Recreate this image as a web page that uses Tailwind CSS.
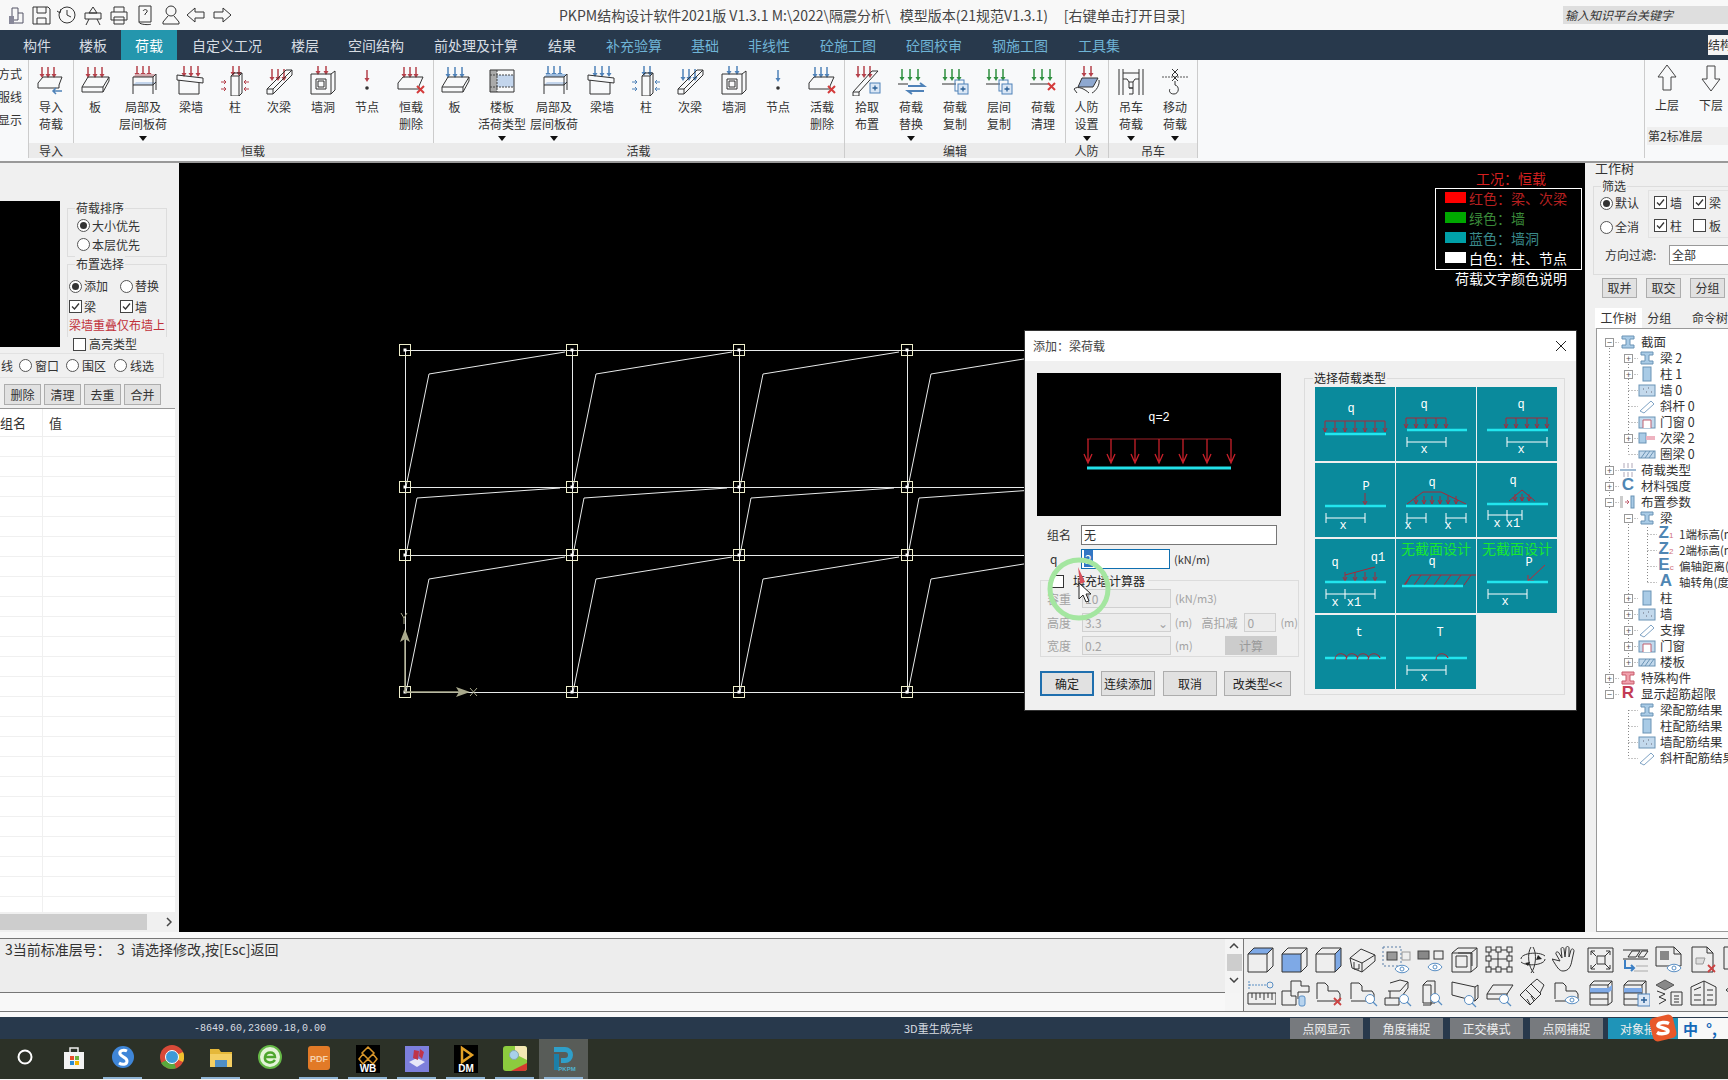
<!DOCTYPE html>
<html lang="zh-CN">
<head>
<meta charset="UTF-8"/>
<title>PKPM结构设计软件</title>
<script src="https://cdn.jsdelivr.net/npm/@tailwindcss/browser@4"></script>
</head>
<body class="bg-[#f5f5f5]">
<div class="relative w-[1728px] h-[1080px] overflow-hidden flex flex-col text-[12px] text-[#333] font-['Noto_Sans_CJK_SC','Liberation_Sans',sans-serif]">

  <!-- title bar -->
  <div class="h-[30px] shrink-0 bg-[#f8f8f8] flex items-center relative">
    <div id="quick" class="flex pl-[3px]"></div>
    <div class="absolute left-[559px] top-[6px] text-[14px] leading-[18px] text-[#444] whitespace-pre">PKPM结构设计软件2021版 V1.3.1 M:\2022\隔震分析\   模型版本(21规范V1.3.1)     [右键单击打开目录]</div>
    <div class="ml-auto w-[165px] h-[18px] bg-[#dedede] italic text-[12px] leading-[18px] pl-[2px] text-[#333]">输入知识平台关键字</div>
  </div>

  <!-- menu bar -->
  <div class="h-[30px] shrink-0 bg-[#28394c] flex pl-[9px] text-[14px] leading-[30px] text-[#d7dde3]">
    <span class="px-[14px]">构件</span><span class="px-[14px]">楼板</span>
    <span class="px-[14px] bg-[#2496ad] text-white">荷载</span>
    <span class="px-[15px]">自定义工况</span><span class="px-[14px]">楼层</span><span class="px-[15px]">空间结构</span><span class="px-[15px]">前处理及计算</span><span class="px-[15px]">结果</span>
    <span class="px-[15px] text-[#6fb4d6]">补充验算</span><span class="px-[14px] text-[#6fb4d6]">基础</span><span class="px-[15px] text-[#6fb4d6]">非线性</span><span class="px-[15px] text-[#6fb4d6]">砼施工图</span><span class="px-[15px] text-[#6fb4d6]">砼图校审</span><span class="px-[15px] text-[#6fb4d6]">钢施工图</span><span class="px-[15px] text-[#6fb4d6]">工具集</span>
    <span class="ml-auto mt-[5px] w-[20px] h-[20px] bg-[#f4f4f4] text-[#333] text-[12px] leading-[20px] overflow-hidden whitespace-nowrap">结构</span>
  </div>

  <!-- ribbon -->
  <div class="h-[100px] shrink-0 bg-[#f8f9fa] flex">
    <div class="w-[29px] shrink-0 h-[98px] border-r border-[#ccc] flex flex-col items-end pr-[6px] pt-[5px] gap-[6px] leading-[17px] whitespace-nowrap overflow-hidden">
      <span>方式</span><span>服线</span><span>显示</span>
    </div>
    <div id="ribbon" class="flex"></div>
    <div class="ml-auto w-[84px] shrink-0 h-[98px] border-l border-[#ccc] flex flex-col">
      <div class="flex">
        <div class="w-[44px] shrink-0 flex flex-col items-center pt-[3px]">
          <svg width="22" height="30" viewBox="0 0 22 30" fill="none" stroke="#444"><path d="M11 2L2 14h5v13h8V14h5z"/></svg>
          <span class="leading-[24px]">上层</span>
        </div>
        <div class="w-[44px] shrink-0 flex flex-col items-center pt-[3px]">
          <svg width="22" height="30" viewBox="0 0 22 30" fill="none" stroke="#444"><path d="M11 28L2 16h5V3h8v13h5z"/></svg>
          <span class="leading-[24px]">下层</span>
        </div>
      </div>
      <div class="mt-[10px] h-[18px] ml-[2px] bg-[#efefef] leading-[18px] pl-[1px]">第2标准层</div>
    </div>
  </div>
  <div class="h-[3px] shrink-0 bg-[#f8f9fa] border-b-2 border-[#999]"></div>

  <!-- main -->
  <div class="h-[769px] shrink-0 flex">
    <!-- left panel -->
    <div class="w-[179px] shrink-0 bg-[#f0f0f0] flex flex-col overflow-hidden">
      <div class="h-[38px]"></div>
      <div class="flex h-[152px]">
        <div class="w-[60px] h-[146px] bg-black shrink-0"></div>
        <div class="ml-[7px] w-[100px] mt-[7px]">
          <div class="relative h-[49px] border border-[#ddd] pt-[7px] pl-[9px]">
            <span class="absolute left-[7px] top-[-9px] bg-[#f0f0f0] px-[1px] leading-[16px]">荷载排序</span>
            <div class="flex items-center gap-[2px] h-[19px]"><span data-radio="on"></span>大小优先</div>
            <div class="flex items-center gap-[2px] h-[19px]"><span data-radio></span>本层优先</div>
          </div>
          <div class="relative h-[73px] mt-[7px] border border-b-0 border-[#ddd] pt-[11px] pl-[1px]">
            <span class="absolute left-[7px] top-[-9px] bg-[#f0f0f0] px-[1px] leading-[16px]">布置选择</span>
            <div class="flex h-[20px] items-center"><span class="flex items-center gap-[2px] w-[51px]"><span data-radio="on"></span>添加</span><span class="flex items-center gap-[2px]"><span data-radio></span>替换</span></div>
            <div class="flex h-[21px] items-center"><span class="flex items-center gap-[2px] w-[51px]"><span data-check="on"></span>梁</span><span class="flex items-center gap-[2px]"><span data-check="on"></span>墙</span></div>
            <div class="text-[#c0303a] leading-[16px] whitespace-nowrap">梁墙重叠仅布墙上</div>
          </div>
          <div class="flex items-center gap-[3px] ml-[6px] mt-[-1px] h-[16px]"><span data-check></span>高亮类型</div>
        </div>
      </div>
      <div class="h-[25px] w-[164px] border border-l-0 border-[#e2e2e2] flex items-center pl-[1px]">
        <span class="w-[18px]">线</span>
        <span class="flex items-center gap-[3px] w-[47px]"><span data-radio></span>窗口</span>
        <span class="flex items-center gap-[3px] w-[48px]"><span data-radio></span>围区</span>
        <span class="flex items-center gap-[3px]"><span data-radio></span>线选</span>
      </div>
      <div class="flex gap-[3px] pl-[4px] mt-[6px] h-[21px] text-center leading-[19px]">
        <span class="w-[37px] bg-[#e1e1e1] border border-[#adadad]">删除</span>
        <span class="w-[37px] bg-[#e1e1e1] border border-[#adadad]">清理</span>
        <span class="w-[37px] bg-[#e1e1e1] border border-[#adadad]">去重</span>
        <span class="w-[37px] bg-[#e1e1e1] border border-[#adadad]">合并</span>
      </div>
      <div class="mt-[3px] w-[175px] h-[504px] bg-white border-t border-[#999] flex flex-col overflow-hidden">
        <div class="flex h-[28px] shrink-0 leading-[27px] text-[13px] border-b border-[#eee]">
          <span class="w-[43px] border-r border-[#eee]">组名</span><span class="pl-[6px]">值</span>
        </div>
        <div id="rows"></div>
      </div>
      <div class="h-[20px] w-[175px] bg-[#f0f0f0] flex items-center relative">
        <span class="w-[147px] h-[16px] bg-[#cdcdcd]"></span>
        <svg class="ml-[19px]" width="6" height="10" viewBox="0 0 6 10" fill="none" stroke="#444" stroke-width="1.5"><path d="M1 1l4 4-4 4"/></svg>
      </div>
    </div>

    <!-- canvas -->
    <div class="w-[1406px] shrink-0 bg-black">
      <svg id="canvas" width="1406" height="769" viewBox="179 163 1406 769" font-family="'Noto Sans CJK SC',sans-serif"></svg>
    </div>

    <!-- right panel -->
    <div class="w-[143px] shrink-0 bg-[#f0f0f0] flex flex-col overflow-hidden">
      <div class="h-[18px] mt-[-3px] pl-[10px] text-[13px] leading-[16px] pt-[0px]">工作树</div>
      <div class="relative ml-[8px] w-[160px] h-[89px] mt-[8px] border border-[#ddd] pt-[3px]">
        <span class="absolute left-[7px] top-[-9px] bg-[#f0f0f0] px-[1px] leading-[16px]">筛选</span>
        <div class="flex">
          <div class="w-[54px] pl-[6px] pt-[1px]">
            <div class="flex items-center gap-[2px] h-[24px]"><span data-radio="on"></span>默认</div>
            <div class="flex items-center gap-[2px] h-[24px]"><span data-radio></span>全消</div>
          </div>
          <div class="w-[100px] border border-[#e2e2e2] pl-[5px] h-[48px]">
            <div class="flex h-[23px] items-center"><span class="flex items-center gap-[3px] w-[39px]"><span data-check="on"></span>墙</span><span class="flex items-center gap-[3px]"><span data-check="on"></span>梁</span></div>
            <div class="flex h-[23px] items-center"><span class="flex items-center gap-[3px] w-[39px]"><span data-check="on"></span>柱</span><span class="flex items-center gap-[3px]"><span data-check></span>板</span></div>
          </div>
        </div>
        <div class="flex items-center mt-[6px] pl-[11px]">
          <span class="w-[64px]">方向过滤:</span>
          <span class="w-[70px] h-[20px] bg-white border border-[#999] leading-[18px] pl-[2px] flex justify-between pr-[2px]">全部<span class="text-[#666]">⌄</span></span>
        </div>
      </div>
      <div class="flex gap-[9px] pl-[17px] mt-[3px] h-[20px] leading-[18px] text-center">
        <span class="w-[35px] shrink-0 bg-[#e1e1e1] border border-[#adadad]">取并</span>
        <span class="w-[35px] shrink-0 bg-[#e1e1e1] border border-[#adadad]">取交</span>
        <span class="w-[35px] shrink-0 bg-[#e1e1e1] border border-[#adadad]">分组</span>
      </div>
      <div class="flex pl-[10px] mt-[10px] h-[20px] leading-[20px] whitespace-nowrap">
        <span class="w-[50px] text-center bg-white">工作树</span>
        <span class="w-[42px] pl-[5px]">分组</span>
        <span class="pl-[10px]">命令树</span>
      </div>
      <div class="relative ml-[11px] w-[140px] flex-1 bg-white border border-[#999] pt-[5px] overflow-hidden">
        <svg class="absolute left-0 top-[-2px]" width="140" height="450" fill="none" stroke="#888" stroke-dasharray="1 2"><path id="treelines"/></svg>
        <div id="tree" class="relative"></div>
      </div>
    </div>
  </div>

  <!-- gap -->
  <div class="h-[7px] shrink-0 bg-[#f8f8f8] border-b border-[#777]"></div>

  <!-- command + toolbars -->
  <div class="h-[73px] shrink-0 flex border-b border-[#777]">
    <div class="w-[1225px] shrink-0 bg-[#f8f8f8] flex flex-col">
      <div class="h-[54px] bg-[#ededed] border-b border-[#777] pl-[5px] text-[14px] leading-[20px] whitespace-pre font-['Noto_Sans_CJK_SC','Liberation_Mono',monospace]">3当前标准层号：  3  请选择修改,按[Esc]返回</div>
    </div>
    <div class="w-[18px] shrink-0 bg-[#f4f4f4] flex flex-col items-center h-[54px] pt-[4px]">
      <svg width="10" height="6" viewBox="0 0 10 6" fill="none" stroke="#444" stroke-width="1.5"><path d="M1 5l4-4 4 4"/></svg>
      <span class="w-[15px] h-[17px] bg-[#cdcdcd] mt-[5px]"></span>
      <svg class="mt-[6px]" width="10" height="6" viewBox="0 0 10 6" fill="none" stroke="#444" stroke-width="1.5"><path d="M1 1l4 4 4-4"/></svg>
    </div>
    <div class="flex-1 bg-[#eeeeee] border-l border-[#777] overflow-hidden pt-[4px]">
      <div id="tools1" class="flex h-[33px] w-[520px]"></div>
      <div id="tools2" class="flex h-[33px] w-[520px]"></div>
    </div>
  </div>
  <div class="h-[5px] shrink-0 bg-[#f8f8f8]"></div>

  <!-- status bar -->
  <div class="h-[22px] shrink-0 bg-[#28394c] flex items-center text-white relative">
    <span class="ml-[194px] w-[710px] text-[10px] text-[#d8dde2] font-['Liberation_Mono',monospace]">-8649.60,23609.18,0.00</span>
    <span class="text-[11px] text-[#d8dde2]">3D重生成完毕</span>
    <div class="ml-auto flex h-[21px] leading-[21px] text-center text-[#eee]">
      <span class="w-[73px] bg-[#777a7e] mr-[7px]">点网显示</span>
      <span class="w-[73px] bg-[#777a7e] mr-[7px]">角度捕捉</span>
      <span class="w-[73px] bg-[#777a7e] mr-[7px]">正交模式</span>
      <span class="w-[73px] bg-[#777a7e] mr-[5px]">点网捕捉</span>
      <span class="w-[70px] bg-[#1f94b8] text-left pl-[12px]">对象捕捉</span>
      <span class="w-[50px] bg-[#f8f8f8] flex items-center gap-[8px] pl-[5px] text-[#1668b8] text-[15px] font-bold">中<span class="leading-none">°,</span></span>
    </div>
    <svg class="absolute left-[1649px] top-[-3px]" width="28" height="28" viewBox="0 0 28 28"><rect x="2" y="2" width="24" height="24" rx="5" fill="#e8582a" transform="rotate(-14 14 14)"/><path d="M20 9.5c-3-1.5-10-1.5-11 1.5s10 3 10 6-8 3.500-11 1.500" fill="none" stroke="#fff" stroke-width="3.500"/></svg>
  </div>

  <!-- taskbar -->
  <div id="taskbar" class="h-[40px] shrink-0 bg-[#2c3127] flex"></div>

  <!-- dialog -->
  <div class="absolute left-[1025px] top-[331px] w-[551px] h-[379px] bg-[#f0f0f0] flex flex-col shadow-[0_0_0_1px_#333]">
    <div class="h-[30px] shrink-0 bg-white flex items-center pl-[8px] pr-[9px] text-[#444]">
      <span>添加：梁荷载</span>
      <svg class="ml-auto" width="12" height="12" viewBox="0 0 12 12" stroke="#222"><path d="M1 1l10 10M11 1L1 11"/></svg>
    </div>
    <div class="flex flex-1">
      <div class="w-[279px] shrink-0 pl-[12px] pt-[12px]">
        <svg id="preview" width="244" height="143" viewBox="1037 373 244 143" class="bg-black block" font-family="'Liberation Mono',monospace"></svg>
        <div class="flex items-center mt-[9px] h-[20px]">
          <span class="w-[44px] pl-[10px]">组名</span>
          <span class="w-[196px] h-[20px] bg-white border border-[#777] pl-[2px] leading-[18px]">无</span>
        </div>
        <div class="flex items-center mt-[4px] h-[20px]">
          <span class="w-[44px] pl-[13px]">q</span>
          <span class="w-[89px] h-[20px] bg-white border border-[#0f6fb0] pl-[2px] leading-[18px]"><span class="bg-[#3277c4] text-white px-[1px]">2</span></span>
          <span class="ml-[4px] text-[11px] text-[#333]">(kN/m)</span>
        </div>
        <div class="relative ml-[3px] mt-[11px] w-[259px] h-[77px] border border-[#dcdcdc] pt-[8px] text-[#a3a3a3] text-[12px]">
          <span class="absolute left-[10px] top-[-7px] bg-[#f0f0f0] flex items-center gap-[9px] text-[#222] pr-[3px] leading-[14px]"><span class="w-[13px] h-[13px] bg-white border border-[#333]"></span>填充墙计算器</span>
          <div class="flex items-center h-[19px]">
            <span class="w-[41px] pl-[6px]">容重</span>
            <span class="w-[89px] h-[19px] bg-[#ececec] border border-[#d0d0d0] pl-[2px] leading-[17px]">10</span>
            <span class="ml-[4px] text-[11px]">(kN/m3)</span>
          </div>
          <div class="flex items-center h-[19px] mt-[5px]">
            <span class="w-[41px] pl-[6px]">高度</span>
            <span class="w-[89px] h-[19px] bg-[#ececec] border border-[#d0d0d0] pl-[2px] leading-[17px] flex justify-between pr-[2px]">3.3<span>⌄</span></span>
            <span class="ml-[4px] w-[27px] text-[11px]">(m)</span>
            <span class="w-[43px]">高扣减</span>
            <span class="w-[32px] h-[19px] bg-[#ececec] border border-[#d0d0d0] pl-[2px] leading-[17px]">0</span>
            <span class="ml-[4px] text-[11px]">(m)</span>
          </div>
          <div class="flex items-center h-[19px] mt-[4px]">
            <span class="w-[41px] pl-[6px]">宽度</span>
            <span class="w-[89px] h-[19px] bg-[#ececec] border border-[#d0d0d0] pl-[2px] leading-[17px]">0.2</span>
            <span class="ml-[4px] w-[50px] text-[11px]">(m)</span>
            <span class="w-[52px] h-[19px] bg-[#cccccc] text-center leading-[19px] text-[#999]">计算</span>
          </div>
        </div>
        <div class="flex mt-[14px] ml-[3px] h-[25px] leading-[23px] text-center text-[#222]">
          <span class="w-[54px] bg-[#e1e1e1] border-2 border-[#1f6fae] leading-[21px]">确定</span>
          <span class="w-[54px] ml-[7px] bg-[#e1e1e1] border border-[#adadad]">连续添加</span>
          <span class="w-[54px] ml-[8px] bg-[#e1e1e1] border border-[#adadad]">取消</span>
          <span class="w-[67px] ml-[7px] bg-[#e1e1e1] border border-[#adadad]">改类型&lt;&lt;</span>
        </div>
      </div>
      <div class="relative w-[261px] h-[317px] mt-[17px] border border-[#dcdcdc] pt-[8px] pl-[10px]">
        <span class="absolute left-[8px] top-[-8px] bg-[#f0f0f0] text-[#222] leading-[14px] px-[1px]">选择荷载类型</span>
        <div id="tiles" class="grid grid-cols-[80px_80px_80px] gap-x-[1px] gap-y-[2px] bg-transparent"></div>
      </div>
    </div>
    <!-- capture ring and pointer -->
    <svg class="absolute left-[20px] top-[224px]" width="68" height="68" viewBox="0 0 68 68">
      <circle cx="34" cy="34" r="29" fill="none" stroke="#a4e6a0" stroke-width="5"/>
      <path d="M33 12l7 15-5 2z" fill="#d8505a"/>
      <path d="M34 28v16l4-4 3 7 3-1-3-7h5z" fill="#fff" stroke="#222"/>
    </svg>
  </div>
</div>

<script>
  const RED = '#b5404a', BLUE = '#4f82b8', GREEN = '#2f8f3f', INK = '#333';

  // small form marks
  document.querySelectorAll('[data-radio]').forEach(el => {
    el.className = 'inline-flex items-center justify-center w-[13px] h-[13px] shrink-0 rounded-full bg-white border border-[#555]';
    if (el.dataset.radio) el.innerHTML = '<span class="w-[7px] h-[7px] rounded-full bg-[#333]"></span>';
  });
  document.querySelectorAll('[data-check]').forEach(el => {
    el.className = 'inline-block w-[13px] h-[13px] shrink-0 bg-white border border-[#444]';
    if (el.dataset.check) el.innerHTML = '<svg width="11" height="11" viewBox="0 0 11 11" fill="none" stroke="#333" stroke-width="1.3"><path d="M2 5.500l2.500 2.500L9 2.500"/></svg>';
  });

  // ribbon icon parts
  function arr(x, y1, y2, c) {
    return `<path d="M${x} ${y1}V${y2 - 3}" stroke="${c}" stroke-width="1.5" fill="none"/><path d="M${x - 2.5} ${y2 - 4}h5l-2.500 4z" fill="${c}"/>`;
  }
  const arrs = (c, xs, y1, y2) => xs.map(x => arr(x, y1, y2, c)).join('');
  const line = d => `<path d="${d}" fill="none" stroke="${INK}" stroke-width="1"/>`;
  const redX = (x, y) => `<path d="M${x} ${y}l7 7M${x + 7} ${y}l-7 7" stroke="#d43b3b" stroke-width="2"/>`;
  const plusDoc = (x, y) => `<rect x="${x}" y="${y}" width="10" height="10" fill="#dbe7f5" stroke="#4f82b8"/><path d="M${x + 2.500} ${y + 5}h5M${x + 5} ${y + 2.500}v5" stroke="#2a5f95" stroke-width="1.3"/>`;
  const ic = {
    slab: c => arrs(c, [9, 16, 23], 1, 12) + line('M3 21l6-10h21l-6 10zM3 21v5h21l6-11v-4M24 21v5'),
    imp: c => arrs(c, [7, 13, 19], 1, 12) + line('M3 17l5-6h19l-3 8v3H3z') + `<path d="M27 25H18M21 22l-3 3 3 3" stroke="${BLUE}" stroke-width="1.500" fill="none"/>`,
    frame: c => arrs(c, [10, 16, 22], 0, 11) + `<path d="M6 11h20l3-3H9z" fill="${c == RED ? '#d3a8ac' : '#9dbcde'}"/><path d="M6 19h20l3-3H9z" fill="#c3d5ec"/>` + line('M6 11h20v17M6 11v17M26 11l3-3v16M6 19h20M26 19l3-3'),
    beam: c => arrs(c, [9, 16, 23], 0, 11) + line('M2 9l26 3v5L2 14zM4 14v14h20V17'),
    col: c => arrs(c, [14, 20], 0, 10) + line('M12 10l3-3h8v20l-3 3h-8zM12 10h8v20M20 10l3-3') + `<path d="M2 16h5M5 14l2 2-2 2M2 23h5M5 21l2 2-2 2M30 16h-5M27 14l-2 2 2 2M30 23h-5M27 21l-2 2 2 2" stroke="${c}" fill="none"/>`,
    sec: c => arrs(c, [9, 15, 21], 3, 15) + line('M4 23L23 4h6L10 23zM4 23v5h6v-5M10 28L29 9V4'),
    hole: c => arrs(c, [11, 19], 0, 9) + line('M4 8h20v20H4zM24 8l4-3v19l-4 4M9 13h10v10H9zM11 15h6v6h-6z'),
    node: c => arr(16, 4, 16, c) + `<circle cx="16" cy="22" r="1.800" fill="#333"/>`,
    del: c => arrs(c, [9, 15, 21], 1, 12) + line('M3 17l5-6h20l-4 9v3H3z') + redX(22, 20),
    type: () => `<rect x="4" y="4" width="7" height="22" fill="#aaa"/><rect x="11" y="9" width="17" height="12" fill="#c3d5ec"/>` + line('M4 4h24v22H4z') + `<path d="M11 4v22M4 9h24M4 21h24" stroke="#444" stroke-dasharray="2 1"/>`,
    pick: () => arrs(RED, [7, 13, 19], 0, 12) + line('M2 26L21 5h6L8 26zM2 26v4h6v-4') + plusDoc(19, 17),
    swap: () => arrs(GREEN, [7, 15, 23], 3, 15) + `<path d="M3 18h10" stroke="#333"/><path d="M13 20h16l-4-3M29 25H13l4 3" stroke="${BLUE}" stroke-width="2" fill="none"/>`,
    copy: () => arrs(GREEN, [6, 13, 20], 3, 15) + `<path d="M3 18h14" stroke="#333"/><rect x="16" y="14" width="9" height="11" fill="none" stroke="${BLUE}"/>` + plusDoc(19, 18),
    clear: () => arrs(GREEN, [7, 15, 23], 3, 15) + `<path d="M3 18h18" stroke="#333"/>` + redX(21, 17),
    civil: () => arrs(RED, [13, 20], 0, 11) + `<path d="M7 21l4-9h16l-5 9z" fill="#8ea8d0" stroke="#333"/>` + line('M3 23c4-4 12 1 15 4M28 14c1 5-3 11-7 13M3 23l3 4'),
    crane: () => line('M4 3v26M8 3v26M24 3v26M28 3v26M8 7h16M8 13h4l2 3h4l2-3h4M14 16v6h4v-6M14 28h4v-6h-4') ,
    hook: () => `<path d="M3 11h26" stroke="#555" stroke-dasharray="2 1"/>` + line('M13 3l6 6-6 6M19 3l-6 6 6 6M16 15v4c5 1 4 9-1 9s-5-4-4-5'),
  };
  function item(w, icon, c, label, caret) {
    const [a, b] = label.split('|');
    return `<div class="${w} h-[83px] shrink-0 flex flex-col items-center pt-[6px]">
      <svg width="32" height="30" viewBox="0 0 32 30" class="shrink-0">${ic[icon](c)}</svg>
      <div class="mt-[2px] h-[34px] w-full text-center leading-[17px] whitespace-nowrap">${a}<br/>${b || ''}</div>
      ${caret ? '<span class="mt-[4px] w-0 h-0 border-x-[4px] border-x-transparent border-t-[5px] border-t-[#111]"></span>' : ''}
    </div>`;
  }
  const N = 'w-[44px]', W = 'w-[52px]';
  const groups = [
    ['导入', [[N, 'imp', RED, '导入|荷载']], 'mr-[-1px]'],
    ['恒载', [[N, 'slab', RED, '板'], [W, 'frame', RED, '局部及|层间板荷', 1], [N, 'beam', RED, '梁墙'], [N, 'col', RED, '柱'], [N, 'sec', RED, '次梁'], [N, 'hole', RED, '墙洞'], [N, 'node', RED, '节点'], [N, 'del', RED, '恒载|删除']], 'mr-[-1px]'],
    ['活载', [['w-[43px]', 'slab', BLUE, '板'], [W, 'type', BLUE, '楼板|活荷类型', 1], [W, 'frame', BLUE, '局部及|层间板荷', 1], [N, 'beam', BLUE, '梁墙'], [N, 'col', BLUE, '柱'], [N, 'sec', BLUE, '次梁'], [N, 'hole', BLUE, '墙洞'], [N, 'node', BLUE, '节点'], [N, 'del', BLUE, '活载|删除']], ''],
    ['编辑', [[N, 'pick', RED, '拾取|布置'], [N, 'swap', GREEN, '荷载|替换', 1], [N, 'copy', GREEN, '荷载|复制'], [N, 'copy', GREEN, '层间|复制'], [N, 'clear', GREEN, '荷载|清理']], 'mr-[-1px]'],
    ['人防', [['w-[43px]', 'civil', RED, '人防|设置', 1]], ''],
    ['吊车', [[N, 'crane', INK, '吊车|荷载', 1], [N, 'hook', INK, '移动|荷载', 1]], ''],
  ];
  document.getElementById('ribbon').innerHTML = groups.map(([name, items, gap]) => `
    <div class="flex flex-col border-r border-[#ccc] ${gap} h-[98px]">
      <div class="flex">${items.map(i => item(...i)).join('')}</div>
      <div class="h-[15px] bg-[#ebebeb] text-center leading-[15px]">${name}</div>
    </div>`).join('');

  // quick access icons
  const quick = [
    '<path d="M7 4h6v12H7zM13 9h5v10h-9" stroke="#556"/><path d="M4 12h5v8H4z" fill="#889" stroke="none"/>',
    '<path d="M3 3h15l2 2v15H3zM7 3v6h9V3M7 20v-6h9v6" stroke="#333"/>',
    '<circle cx="11" cy="11" r="8" stroke="#333"/><path d="M11 6v5l4 2" stroke="#333"/><path d="M1 7l3 2 1-4" stroke="#333"/>',
    '<path d="M3 9h16v6H3zM7 15l-3 6M15 15l3 6M11 3l4 6H7z" stroke="#333"/>',
    '<path d="M6 8V3h10v5M3 8h16v8H3zM6 13h10v7H6z" stroke="#333"/>',
    '<path d="M5 2h12v16H5zM5 18c0 3 12 3 12 2M9 7c1-2 5-2 4 1l-2 2v1" stroke="#333"/>',
    '<circle cx="11" cy="7" r="5" stroke="#333"/><path d="M8 12l-5 6v2h16v-2l-5-6" stroke="#333"/>',
    '<path d="M2 11l8-7v4h9v6h-9v4z" stroke="#333"/>',
    '<path d="M20 11l-8-7v4H3v6h9v4z" stroke="#333"/>',
  ];
  const quickW = ['w-[25px]','w-[26px]','w-[25px]','w-[27px]','w-[25px]','w-[27px]','w-[25px]','w-[26px]','w-[26px]'];
  document.getElementById('quick').innerHTML = quick.map((p, i) => `<span class="${quickW[i]} flex justify-center"><svg width="22" height="22" viewBox="0 0 22 22" fill="none">${p}</svg></span>`).join('');

  // left table rows
  document.getElementById('rows').innerHTML = Array.from({ length: 24 }, () =>
    '<div class="h-[20px] border-b border-[#f0f0f0] flex"><span class="w-[43px] border-r border-[#f0f0f0]"></span></div>').join('');

  // structure view
  const xs = [405, 572, 739, 907, 1074], ys = [350, 487, 555, 692];
  let cv = '<g stroke="#e8eaea" stroke-width="1" fill="none">';
  ys.forEach(y => cv += `<path d="M405 ${y + 0.5}H1040"/>`);
  xs.slice(0, 4).forEach(x => cv += `<path d="M${x + 0.5} 350V692"/>`);
  xs.slice(0, 4).forEach(x => {
    cv += `<path d="M${x + 1} 692L${x + 24} 579L${x + 160} 557"/><path d="M${x + 1} 555L${x + 12} 498L${x + 155} 488"/><path d="M${x + 1} 487L${x + 24} 374L${x + 160} 352"/>`;
  });
  cv += '</g>';
  xs.slice(0, 4).forEach(x => ys.forEach(y => {
    cv += `<rect x="${x - 5.500}" y="${y - 5.500}" width="11" height="11" fill="none" stroke="#eeeecb"/><rect x="${x - 1.500}" y="${y - 1.500}" width="3" height="3" fill="#fff"/>`;
  }));
  cv += `<g stroke="#a9a98c" stroke-width="1.500" fill="none"><path d="M405 692V635M405 692H465"/></g>
    <path d="M405 629l-5 13 5-3 5 3zM470 692l-14-5 3 5-3 5z" fill="#a9a98c"/>
    <path d="M401 613l3 5 3-5M404 618v6M470 688l7 8M477 688l-7 8" stroke="#a9a98c" fill="none"/>`;
  cv += `<text x="1476" y="184" font-size="14" fill="#d62020">工况：恒载</text>
    <rect x="1435.500" y="188.500" width="146" height="81" fill="none" stroke="#fff"/>
    <rect x="1445" y="192" width="21" height="11" fill="#ff0000"/><rect x="1445" y="212" width="21" height="11" fill="#00a800"/>
    <rect x="1445" y="232" width="21" height="11" fill="#00a0a8"/><rect x="1445" y="252" width="21" height="11" fill="#ffffff"/>
    <text x="1469" y="204" font-size="14" fill="#b82020">红色：梁、次梁</text>
    <text x="1469" y="224" font-size="14" fill="#3a8a3a">绿色：墙</text>
    <text x="1469" y="244" font-size="14" fill="#3a8a8a">蓝色：墙洞</text>
    <text x="1469" y="264" font-size="14" fill="#ffffff">白色：柱、节点</text>
    <text x="1455" y="284" font-size="14" fill="#ffffff">荷载文字颜色说明</text>`;
  document.getElementById('canvas').innerHTML = cv;

  // dialog preview
  let pv = `<text x="1159" y="421" fill="#fff" font-size="12" text-anchor="middle">q=2</text>
    <path d="M1087 439H1231" stroke="#a02028"/><path d="M1087 468H1231" stroke="#22e0e8" stroke-width="3"/>`;
  [1088, 1111, 1135, 1159, 1183, 1207, 1231].forEach(x => {
    pv += `<path d="M${x} 439V461M${x - 4} 454l4 9 4-9" stroke="#c8202a" stroke-width="1.300" fill="none"/>`;
  });
  document.getElementById('preview').innerHTML = pv;

  // load type tiles
  const T = (x, y, s) => `<text x="${x}" y="${y}" fill="#fff" font-size="12" text-anchor="middle">${s}</text>`;
  const Beam = (a, b, y) => `<path d="M${a} ${y}H${b}" stroke="#22e6ee" stroke-width="2.500"/>`;
  const Dim = (y, ...p) => `<path d="M${p[0]} ${y}H${p[p.length - 1]}" stroke="#fff"/>` + p.map(x => `<path d="M${x} ${y - 5}V${y + 5}" stroke="#fff"/>`).join('');
  const Dn = (x, y1, y2) => `<path d="M${x} ${y1}V${y2}M${x - 2} ${y2 - 4}l2 4 2-4" stroke="#a82838" fill="none"/>`;
  const Dns = (xl, y1, y2) => xl.map(x => Dn(x, y1, y2)).join('');
  const Top = d => `<path d="${d}" stroke="#a82838" fill="none"/>`;
  const Green = `<text x="40" y="15" fill="#18e830" font-size="14" text-anchor="middle" font-family="'Noto Sans CJK SC',sans-serif">无截面设计</text>`;
  const Arc = x => `<path d="M${x - 5} 45c0-8 10-8 12-2M${x + 7} 43l-2-3" stroke="#a82838" fill="none"/>`;
  const tiles = [
    T(36, 25, 'q') + Top('M10 34H70') + Dns([10, 20, 30, 40, 50, 60, 70], 34, 45) + Beam(10, 71, 47),
    T(28, 21, 'q') + Top('M10 31H50') + Dns([10, 20, 30, 40, 50], 31, 41) + Beam(11, 71, 43) + Dim(55, 11, 50) + T(28, 66, 'x'),
    T(44, 21, 'q') + Top('M29 31H71') + Dns([29, 39, 50, 60, 70], 31, 41) + Beam(10, 71, 43) + Dim(55, 30, 70) + T(44, 66, 'x'),
    T(51, 27, 'P') + Dn(50, 30, 42) + Beam(10, 71, 43) + Dim(55, 11, 50) + T(28, 66, 'x'),
    T(36, 23, 'q') + Top('M11 41L27 29H45L70 41') + Dns([20, 28, 36, 44, 52, 60], 33, 41) + Beam(10, 71, 43) + Dim(55, 11, 30) + Dim(55, 50, 70) + T(12, 66, 'x') + T(52, 66, 'x'),
    T(36, 21, 'q') + Top('M32 38L45 27L58 38') + Dns([38, 45, 52], 31, 38) + Beam(10, 71, 41) + Dim(52, 11, 30, 45) + T(20, 64, 'x') + T(36, 64, 'x1'),
    T(20, 27, 'q') + T(63, 22, 'q1') + Top('M30 36L60 28') + Dns([30, 40, 50, 60], 33, 42) + Beam(10, 71, 43) + Dim(55, 11, 30, 60) + T(20, 67, 'x') + T(39, 67, 'x1'),
    Green + T(36, 26, 'q') + Top('M8 48L15 36H80') + [15, 25, 35, 45, 55, 65, 75].map(x => `<path d="M${x} 36L${x - 7} 46" stroke="#a82838"/>`).join('') + Beam(6, 67, 47),
    Green + T(52, 27, 'P') + `<path d="M68 26L51 42M51 36v6h6" stroke="#c02838" fill="none"/>` + Beam(10, 71, 43) + Dim(55, 11, 50) + T(28, 66, 'x'),
    T(44, 21, 't') + Beam(10, 71, 43) + Arc(25) + Arc(36) + Arc(47) + Arc(58),
    T(44, 21, 'T') + Beam(10, 71, 43) + Arc(45) + Dim(55, 11, 50) + T(28, 66, 'x'),
  ];
  document.getElementById('tiles').innerHTML = tiles.map(t =>
    `<svg width="80" height="74" viewBox="0 0 80 74" class="bg-[#0a8a9c] block" font-family="'Liberation Mono',monospace">${t}</svg>`).join('');

  // work tree
  const tI = {
    ibeam: '<path d="M3 2h12v3h-4v6h4v3H3v-3h4V5H3z" fill="#a9cbe6" stroke="#6a93b5"/>',
    column: '<rect x="5" y="1" width="8" height="14" fill="#a9cbe6" stroke="#6a93b5"/>',
    wall: '<rect x="1" y="3" width="16" height="11" fill="#c3d9ec" stroke="#6a93b5"/><path d="M5 7h1M10 6h1M8 10h1M13 10h1" stroke="#667"/>',
    brace: '<path d="M2 13L13 3l3 3L6 15z" fill="#fff" stroke="#7fa3c4"/>',
    door: '<rect x="1" y="3" width="16" height="11" fill="#c3d9ec" stroke="#6a93b5"/><path d="M5 14V6h8v8" fill="#fff" stroke="#c06070"/>',
    second: '<rect x="1" y="3" width="7" height="10" fill="#a9cbe6" stroke="#6a93b5"/><rect x="8" y="6" width="9" height="4" fill="#eeb3c0"/>',
    ring: '<rect x="1" y="5" width="16" height="7" fill="#c3d9ec" stroke="#6a93b5"/><path d="M3 12l5-7M7 12l5-7M11 12l5-7" stroke="#6a93b5"/>',
    load: '<path d="M1 8h16" stroke="#7fa3c4" stroke-width="1.500"/><path d="M5 1v5M9 1v5M13 1v5M5 10v5M9 10v5M13 10v5" stroke="#b0a8b8"/>',
    layout: '<rect x="1" y="2" width="3" height="12" fill="#ccc"/><path d="M6 8h4M8 6l2 2-2 2" stroke="#c06070" fill="none"/><rect x="12" y="2" width="3" height="12" fill="#a9cbe6" stroke="#6a93b5"/>',
    red: '<path d="M3 2h12v3h-4v6h4v3H3v-3h4V5H3z" fill="#f0a0ac" stroke="#c75a6a"/>',
  };
  const tL = {
    C: ['C', '', 'text-[#4f86b3]'], R: ['R', '', 'text-[#c23b55]'], Z1: ['Z', '1', 'text-[#4f86b3]'], Z2: ['Z', '2', 'text-[#4f86b3]'], E: ['E', 'c', 'text-[#4f86b3]'], A: ['A', '', 'text-[#4f86b3]'],
  };
  const treeData = [
    [0,'-','ibeam','截面'],[1,'+','ibeam','梁 2'],[1,'+','column','柱 1'],[1,'','wall','墙 0'],[1,'','brace','斜杆 0'],[1,'','door','门窗 0'],[1,'+','second','次梁 2'],[1,'','ring','圈梁 0'],
    [0,'+','load','荷载类型'],[0,'+','C','材料强度'],[0,'-','layout','布置参数'],[1,'-','ibeam','梁'],
    [2,'','Z1','1端标高(m)'],[2,'','Z2','2端标高(m)'],[2,'','E','偏轴距离(mm)'],[2,'','A','轴转角(度)'],
    [1,'+','column','柱'],[1,'+','wall','墙'],[1,'+','brace','支撑'],[1,'+','door','门窗'],[1,'+','ring','楼板'],
    [0,'+','red','特殊构件'],[0,'-','R','显示超筋超限'],[1,'','ibeam','梁配筋结果'],[1,'','column','柱配筋结果'],[1,'','wall','墙配筋结果'],[1,'','brace','斜杆配筋结果'],
  ];
  const pads = ['pl-[8px]', 'pl-[27px]', 'pl-[46px]'];
  document.getElementById('tree').innerHTML = treeData.map(([lv, ex, icon, text]) => {
    const box = ex ? `<span class="w-[9px] h-[9px] shrink-0 bg-white border border-[#999] flex items-center justify-center text-[9px] leading-[7px] text-[#555]">${ex == '+' ? '+' : '−'}</span>` : '<span class="w-[9px] shrink-0"></span>';
    const pic = tI[icon]
      ? `<svg width="18" height="16" viewBox="0 0 18 16" class="shrink-0 bg-white">${tI[icon]}</svg>`
      : `<span class="w-[18px] shrink-0 bg-white text-center text-[17px] font-bold leading-[16px] font-['Liberation_Sans',sans-serif] ${tL[icon][2]}">${tL[icon][0]}<span class="text-[8px] text-[#d0707a] font-normal">${tL[icon][1]}</span></span>`;
    return `<div class="h-[16px] flex items-center whitespace-nowrap ${pads[lv]}">${box}<span class="w-[5px] shrink-0"></span>${pic}<span class="ml-[4px] bg-white leading-[16px] ${lv == 2 ? 'text-[11.500px]' : 'text-[12.500px]'}">${text}</span></div>`;
  }).join('');
  let tl = 'M12.500 15V367M31.500 31V127M31.500 191V335M31.500 383V431M50.500 191V255';
  treeData.forEach(([lv, ex], i) => {
    const y = 15.5 + i * 16;
    if (lv == 0) tl += `M12.500 ${y}H22`;
    if (lv == 1) tl += `M31.500 ${y}H41`;
    if (lv == 2) tl += `M50.500 ${y}H60`;
  });
  document.getElementById('treelines').setAttribute('d', tl);

  // bottom toolbars
  const P = (d, extra = '') => `<path d="${d}" fill="none" stroke="#333" ${extra}/>`;
  const Bf = d => `<path d="${d}" fill="#7ea9e6" stroke="none"/>`;
  const cube = 'M2 9l6-6h19v18l-6 6H2zM2 9h19v18M21 9l6-6';
  const eye = (x, y) => `<path d="M${x - 7} ${y}c3-5 11-5 14 0c-3 5-11 5-14 0z" fill="#fff" stroke="#5a8fc4"/><circle cx="${x}" cy="${y}" r="2" fill="none" stroke="#5a8fc4"/>`;
  const mag = (x, y) => `<circle cx="${x}" cy="${y}" r="4.500" fill="#fff" stroke="#5a8fc4"/><path d="M${x + 3} ${y + 3}l4 4" stroke="#5a8fc4" stroke-width="1.300"/>`;
  const xx = (x, y) => `<path d="M${x} ${y}l7 7M${x + 7} ${y}l-7 7" stroke="#cc4444" stroke-width="1.800"/>`;
  const ll = 'M3 21V5h8l3 3v5h10l2 3v7H3';
  const stack = '<path d="M4 7l4-4h18v21l-4 3H4zM4 7h18v20M22 7l4-4" fill="none" stroke="#333"/>';
  const row1 = [
    Bf('M2 9l6-6h19l-6 6z') + P(cube),
    Bf('M2 9h19v18H2z') + P(cube),
    Bf('M21 9l6-6v18l-6 6z') + P(cube),
    P('M2 13l11-9 14 6v6l-13 11-10-4zM2 13l12 5 13-8M14 18v9M6 17v7h5v-5'),
    '<rect x="1" y="2" width="18" height="19" fill="none" stroke="#5a7fa8" stroke-dasharray="2 2"/><rect x="5" y="7" width="10" height="8" fill="#999" stroke="#444"/><rect x="20" y="7" width="8" height="8" fill="none" stroke="#999"/>' + eye(20, 24),
    '<rect x="2" y="6" width="11" height="8" fill="#888" stroke="#444"/><rect x="18" y="6" width="9" height="8" fill="none" stroke="#333"/>' + eye(19, 22),
    P('M2 8l6-5h19v19l-6 5H2zM2 8h19v19M21 8l6-5M6 11h11v11H6zM8 8h14v13'),
    P('M7 5h16M7 24h16M5 7v15M25 7v15M14 5v19M5 14h20') + '<g fill="#eee" stroke="#333"><rect x="2" y="2" width="5" height="5"/><rect x="12" y="2" width="5" height="5"/><rect x="23" y="2" width="5" height="5"/><rect x="2" y="11" width="5" height="5"/><rect x="23" y="11" width="5" height="5"/><rect x="2" y="22" width="5" height="5"/><rect x="12" y="22" width="5" height="5"/><rect x="23" y="22" width="5" height="5"/></g>',
    P('M3 14c0-6 18-8 24-3M27 14c0 6-18 8-24 3M13 2c-4 6-3 20 3 26M15 2c4 6 3 20-2 26') + '<path d="M20 10l4 4-6 1zM7 18l5-1-2 4z" fill="#222"/>',
    P('M8 16L4 9c-1-2 2-3 3-1l3 5-1-9c0-2 3-2 3 0l1 8 1-9c0-2 3-2 3 0l0 9 2-7c1-2 3-1 3 1l-2 9c-1 6-3 11-9 11-4 0-6-4-11-12z'),
    P('M2 3h25v24H2zM11 11h8v8h-8zM5 6l5 5M5 6h4M5 6v4M24 6l-5 5M24 6h-4M24 6v4M5 24l5-5M5 24h4M5 24v-4M24 24l-5-5M24 24h-4M24 24v-4'),
    P('M3 5h25M8 12l4-6h8l-4 6zM18 12l4-6h6l-4 6zM3 14h25') + `<path d="M5 15v8h9M11 20l3 3-3 3" stroke="#3b7fc4" stroke-width="2" fill="none"/>` + '<path d="M16 21h12M14 26h14" stroke="#aaa"/>',
    P('M2 2h18l7 7v12H2zM20 2v7h7') + '<rect x="6" y="6" width="9" height="9" fill="#888"/>' + eye(20, 23),
    P('M4 2h15l6 6v19H4zM19 2v6h6') + '<path d="M8 13h9l-2 6H8z" fill="#ddd" stroke="#999"/>' + xx(20, 20),
    P('M12 2H2v22h20'),
  ];
  const row2 = [
    P('M2 15h28v11H2zM6 15v5M10 15v7M14 15v5M18 15v7M22 15v5M26 15v7') + '<path d="M3 3v9M3 7h17" stroke="#5a8fc4" stroke-dasharray="2 1" fill="none"/><circle cx="24" cy="7" r="3" fill="none" stroke="#5a8fc4"/>',
    P('M2 13h9v5h5v9H2zM11 13V3h10v5h8v6H18v7') + '<rect x="19" y="18" width="6" height="10" rx="2" fill="#b7d3ee" stroke="#5a8fc4"/>',
    P(ll) + xx(20, 20),
    P(ll) + mag(22, 21),
    P('M3 20h14v7H3zM8 20V13M6 13h12l8-9v6l-6 8M8 5L18 2l8 2') + mag(22, 21),
    P('M7 7l4-4h8v22H7zM7 7h8v20H7') + mag(19, 20),
    P('M2 4l23 5v14L2 17zM25 9l3-2v13l-3 3') + mag(19, 22),
    P('M3 16l6-9h20l-6 9zM3 16v5h20v-5') + mag(20, 21),
    P('M2 17L13 6l10 10-11 11zM13 6l6-5 7 6-4 8M8 12l9 9M12 26l-3-5M16 23l-3-5'),
    P(ll) + eye(20, 22),
    stack + '<path d="M4 10h18v5H4z" fill="#7ea9e6"/><path d="M22 10l4-3v5l-4 3z" fill="#7ea9e6"/>' + P('M4 15h18M4 21h18'),
    stack + '<path d="M4 10h18v5H4z" fill="#7ea9e6"/>' + P('M4 15h18M4 21h16') + '<rect x="18" y="16" width="12" height="12" fill="#dbe7f5" stroke="#4f82b8"/><path d="M21 22h6M24 19v6" stroke="#2a5f95" stroke-width="1.500"/>',
    '<path d="M2 7l9-5 9 5-9 5z" fill="#888" stroke="#555"/>' + P('M3 13l8 3-6 3 7 3-7 4M17 14h11v13H17zM20 18h5M20 21h5M20 24h5'),
    P('M3 9l13-6v24H3zM16 3l12 6v18H16M6 12l7-3M6 17h7M6 22h7M19 12h6M19 17h6M19 22h6'),
    P('M14 4L4 12l10 8'),
  ];
  const toolHtml = r => r.map(s => `<span class="w-[34px] shrink-0 flex justify-center items-center"><svg width="30" height="30" viewBox="0 0 30 30">${s}</svg></span>`).join('');
  document.getElementById('tools1').innerHTML = toolHtml(row1);
  document.getElementById('tools2').innerHTML = toolHtml(row2);

  // taskbar icons
  const txt = (x, y, s, c, fs) => `<text x="${x}" y="${y}" fill="${c}" font-size="${fs}" font-weight="700" text-anchor="middle" font-family="'Liberation Sans',sans-serif">${s}</text>`;
  const task = [
    ['<circle cx="12" cy="12" r="6.500" fill="none" stroke="#fff" stroke-width="2"/>'],
    ['<path d="M2 7h20v17H2z" fill="#f3f3f3"/><path d="M8 7V3h8v4" fill="none" stroke="#eee" stroke-width="1.500"/><rect x="8" y="11" width="4" height="4" fill="#e74c2a"/><rect x="13" y="11" width="4" height="4" fill="#6db33f"/><rect x="8" y="16" width="4" height="4" fill="#2a8ad4"/><rect x="13" y="16" width="4" height="4" fill="#f4b400"/>', 0],
    ['<circle cx="12" cy="12" r="11" fill="#3f86d8"/><path d="M16 6c-4-2-8 0-7 3s7 3 7 7-5 4-8 2" fill="none" stroke="#fff" stroke-width="3"/>', 1],
    ['<circle cx="12" cy="12" r="12" fill="#d94a38"/><path d="M12 12L1 18a12 12 0 0 0 15 5z" fill="#5aa83c"/><path d="M12 12l11 5a12 12 0 0 0 0-10z" fill="#f2c12e"/><circle cx="12" cy="12" r="6.500" fill="#3e9ad6" stroke="#fff"/>', 0],
    ['<path d="M1 4h9l2 3h11v5H1z" fill="#e5b83a"/><path d="M1 9h22v13H1z" fill="#f4cf63"/><rect x="6" y="15" width="12" height="7" fill="#4f8fc6"/>', 1],
    ['<circle cx="12" cy="12" r="11" fill="#e4f4d8" stroke="#65b846" stroke-width="2"/><path d="M7 12h10c0-6-9-6-10 0s7 7 10 3" fill="none" stroke="#4ea72e" stroke-width="2.500"/>', 0],
    ['<rect x="1" y="1" width="22" height="24" rx="3" fill="#e27a27"/>' + txt(12, 17, 'PDF', '#f6d3ae', 9), 1],
    ['<rect x="0" y="0" width="24" height="28" fill="#000"/><path d="M12 2l6 6-6 6-6-6zM7 9l5 5-5 5-4-5zM17 9l4 5-4 5-5-5z" fill="none" stroke="#d8962a" stroke-width="1.500"/>' + txt(12, 27, 'WB', '#fff', 10), 1],
    ['<rect x="0" y="1" width="24" height="26" fill="#7d7fdc"/><path d="M4 17l8 5 8-5-8-4z" fill="#e8e8f8"/><path d="M9 5l5 1-1 9-5-2zM15 4l4 3-2 7-3-3z" fill="#c0344a"/>', 1],
    ['<rect x="0" y="0" width="24" height="28" fill="#000"/><path d="M8 3l10 7-10 7z" fill="none" stroke="#e3a126" stroke-width="2.500"/>' + txt(12, 27, 'DM', '#fff', 10), 1],
    ['<rect x="0" y="1" width="24" height="25" rx="3" fill="#8ccb3e"/><path d="M12 1h9a3 3 0 0 1 3 3v11L12 9z" fill="#f3e7b4"/><path d="M8 26l16-8v5a3 3 0 0 1-3 3z" fill="#d43a30"/><circle cx="11" cy="10" r="4.500" fill="#a8d0ea" stroke="#8aa"/>', 1],
    ['<path d="M2 2h11a8 8 0 0 1 0 16H9v-5h4a3 3 0 0 0 0-6H2z" fill="#2f9fc9"/><path d="M2 9h5v16H2z" fill="#1c7fa8"/>' + txt(15, 26, 'PKPM', '#4fb3d0', 6), 2],
  ];
  document.getElementById('taskbar').innerHTML = task.map(([s, st]) => {
    const bg = st === 2 ? 'bg-[#585c58]' : '';
    const under = st ? '<span class="absolute left-[5px] right-[5px] bottom-0 h-[2px] bg-[#8fb4d4]"></span>' : '';
    return `<span class="relative w-[49px] shrink-0 flex items-center justify-center ${bg}"><svg width="24" height="28" viewBox="0 0 24 28">${s}</svg>${under}</span>`;
  }).join('');
</script>
</body>
</html>
